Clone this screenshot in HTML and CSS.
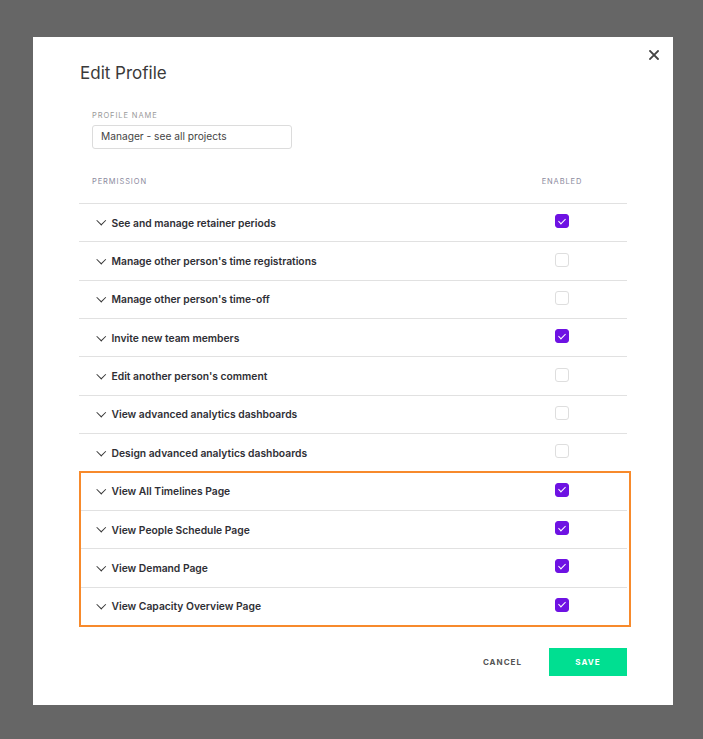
FILE: index.html
```html
<!DOCTYPE html>
<html lang="en">
<head>
    <meta charset="UTF-8">
    <meta name="viewport" content="width=device-width, initial-scale=1.0">
    <title>Edit Profile</title>
    <link rel="stylesheet" href="styles.css">
</head>
<body>
    <div class="modal">
        <button class="close-button" aria-label="Close">
            <svg width="10" height="10" viewBox="0 0 10 10"><path d="M1 1L9 9M9 1L1 9" stroke="#444" stroke-width="1.8" stroke-linecap="square"/></svg>
        </button>

        <h1>Edit Profile</h1>

        <div class="campo">
            <label>Profile name</label>
            <input type="text" value="Manager - see all projects">
        </div>

        <div class="tabla">
            <div class="tabla-header">
                <span class="col-permiso">Permission</span>
                <span class="col-enabled">Enabled</span>
            </div>

            <div class="fila"><span class="col-permiso"><i class="chevron"></i>See and manage retainer periods</span><span class="col-enabled"><span class="check on"></span></span></div>
            <div class="fila"><span class="col-permiso"><i class="chevron"></i>Manage other person's time registrations</span><span class="col-enabled"><span class="check"></span></span></div>
            <div class="fila"><span class="col-permiso"><i class="chevron"></i>Manage other person's time-off</span><span class="col-enabled"><span class="check"></span></span></div>
            <div class="fila"><span class="col-permiso"><i class="chevron"></i>Invite new team members</span><span class="col-enabled"><span class="check on"></span></span></div>
            <div class="fila"><span class="col-permiso"><i class="chevron"></i>Edit another person's comment</span><span class="col-enabled"><span class="check"></span></span></div>
            <div class="fila"><span class="col-permiso"><i class="chevron"></i>View advanced analytics dashboards</span><span class="col-enabled"><span class="check"></span></span></div>
            <div class="fila"><span class="col-permiso"><i class="chevron"></i>Design advanced analytics dashboards</span><span class="col-enabled"><span class="check"></span></span></div>

            <div class="grupo-resaltado">
                <div class="fila"><span class="col-permiso"><i class="chevron"></i>View All Timelines Page</span><span class="col-enabled"><span class="check on"></span></span></div>
                <div class="fila"><span class="col-permiso"><i class="chevron"></i>View People Schedule Page</span><span class="col-enabled"><span class="check on"></span></span></div>
                <div class="fila"><span class="col-permiso"><i class="chevron"></i>View Demand Page</span><span class="col-enabled"><span class="check on"></span></span></div>
                <div class="fila"><span class="col-permiso"><i class="chevron"></i>View Capacity Overview Page</span><span class="col-enabled"><span class="check on"></span></span></div>
            </div>
        </div>

        <div class="acciones">
            <button class="btn-cancel">Cancel</button>
            <button class="btn-save">Save</button>
        </div>
    </div>
</body>
</html>
```

FILE: styles.css
```css
body {
    font-family: Inter, "Liberation Sans", Arial, sans-serif;
    margin: 0;
    padding: 37px 0 0 33px;
    background-color: #666666;
    height: 739px;
    box-sizing: border-box;
    overflow: hidden;
}

.modal {
    position: relative;
    width: 640px;
    height: 668px;
    box-sizing: border-box;
    background-color: white;
    padding: 25px 46px 0 46px;
}

.close-button {
    position: absolute;
    top: 13px;
    right: 14px;
    background: none;
    border: none;
    padding: 0;
    cursor: pointer;
}

    .close-button svg {
        display: block;
    }

h1 {
    font-size: 17px;
    font-weight: 400;
    color: #3a3a3a;
    margin: 0 0 0 1px;
    line-height: 22px;
}

.campo {
    margin: 27px 0 0 13px;
}

    .campo label {
        display: block;
        font-size: 7.5px;
        letter-spacing: 0.9px;
        text-transform: uppercase;
        color: #9a9a9a;
        line-height: 10px;
    }

    .campo input {
        display: block;
        margin-top: 4px;
        width: 200px;
        height: 24px;
        box-sizing: border-box;
        border: 1px solid #dcdcdc;
        border-radius: 3px;
        padding: 0 8px 2px 8px;
        font-family: inherit;
        font-size: 10.2px;
        color: #444;
    }

.tabla {
    margin-top: 28px;
    width: 548px;
}

.tabla-header {
    display: flex;
    height: 26px;
    font-size: 7.5px;
    letter-spacing: 0.9px;
    text-transform: uppercase;
    color: #8b8a9e;
    line-height: 10px;
}

    .tabla-header .col-permiso {
        padding-left: 13px;
    }

.col-permiso {
    flex: 1;
}

.col-enabled {
    width: 130px;
    display: flex;
    justify-content: center;
}

.fila {
    display: flex;
    align-items: center;
    height: 38.36px;
    box-sizing: border-box;
    border-top: 1px solid #e1e1e1;
    font-size: 10.3px;
    font-weight: 600;
    color: #2f2f35;
}

    .fila .col-permiso {
        display: flex;
        align-items: center;
        padding-left: 18px;
    }

.chevron {
    display: inline-block;
    width: 5.5px;
    height: 5.5px;
    border-right: 1.8px solid #333;
    border-bottom: 1.8px solid #333;
    transform: rotate(45deg);
    margin: -4px 7px 0 1px;
}

.check {
    width: 14px;
    height: 14px;
    box-sizing: border-box;
    border: 1px solid #dedede;
    border-radius: 3px;
    margin-top: -3px;
    position: relative;
}

    .check.on {
        background-color: #6e12e3;
        border-color: #6e12e3;
    }

        .check.on::after {
            content: "";
            position: absolute;
            left: 3.5px;
            top: 1.5px;
            width: 3px;
            height: 6px;
            border-right: 1.3px solid white;
            border-bottom: 1.3px solid white;
            transform: rotate(45deg);
        }

.grupo-resaltado {
    position: relative;
}

    .grupo-resaltado::after {
        content: "";
        position: absolute;
        left: 0;
        top: -1px;
        right: -4px;
        bottom: -2px;
        border: 2px solid #f78a2c;
        pointer-events: none;
    }

.acciones {
    display: flex;
    justify-content: flex-end;
    align-items: center;
    width: 548px;
    margin-top: 23px;
}

.btn-cancel {
    background: none;
    border: none;
    font-family: inherit;
    font-size: 8px;
    font-weight: 700;
    letter-spacing: 1px;
    text-transform: uppercase;
    color: #555;
    margin-right: 21px;
    cursor: pointer;
}

.btn-save {
    width: 78px;
    height: 28px;
    background-color: #00df91;
    border: none;
    font-family: inherit;
    font-size: 8px;
    font-weight: 700;
    letter-spacing: 1px;
    text-transform: uppercase;
    color: white;
    cursor: pointer;
}
```
